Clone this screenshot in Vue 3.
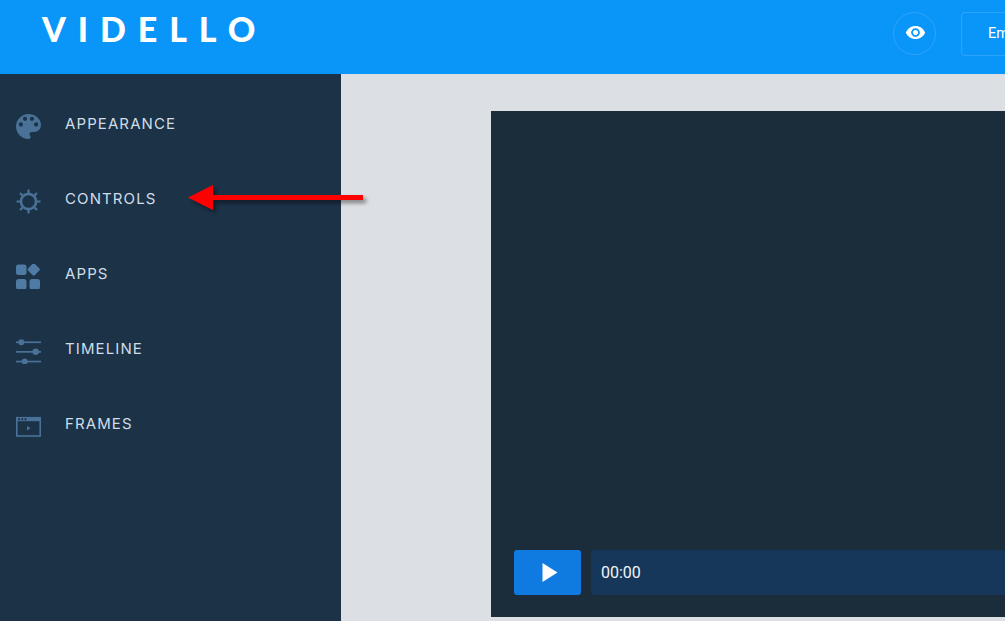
<script setup>
const navItems = [
  { label: 'APPEARANCE', icon: 'palette' },
  { label: 'CONTROLS', icon: 'gear' },
  { label: 'APPS', icon: 'apps' },
  { label: 'TIMELINE', icon: 'timeline' },
  { label: 'FRAMES', icon: 'frames' },
]
</script>

<template>
  <div class="page">
    <header class="topbar">
      <div class="logo">VIDELLO</div>
      <div class="topbar-actions">
        <button class="preview-btn" type="button" aria-label="Preview">
          <svg width="21" height="21" viewBox="0 0 24 24" fill="#fff">
            <path d="M12 4.5C7 4.5 2.73 7.61 1 12c1.73 4.39 6 7.5 11 7.5s9.27-3.11 11-7.5c-1.73-4.39-6-7.5-11-7.5zM12 17c-2.76 0-5-2.24-5-5s2.24-5 5-5 5 2.24 5 5-2.24 5-5 5zm0-8c-1.66 0-3 1.34-3 3s1.34 3 3 3 3-1.34 3-3-1.34-3-3-3z" />
          </svg>
        </button>
        <button class="embed-btn" type="button">Embed</button>
      </div>
    </header>

    <div class="body">
      <aside class="sidebar">
        <div v-for="item in navItems" :key="item.label" class="nav-item">
          <span class="nav-icon">
            <svg v-if="item.icon === 'palette'" width="25" height="25" viewBox="3 3 18 18" fill="#4a7198">
              <path d="M12 3c-4.97 0-9 4.03-9 9s4.03 9 9 9c.83 0 1.5-.67 1.5-1.5 0-.39-.15-.74-.39-1.01-.23-.26-.38-.61-.38-.99 0-.83.67-1.5 1.5-1.5H16c2.76 0 5-2.24 5-5 0-4.42-4.03-8-9-8zm-5.5 9c-.83 0-1.5-.67-1.5-1.5S5.67 9 6.5 9 8 9.67 8 10.5 7.33 12 6.5 12zm3-4C8.67 8 8 7.33 8 6.5S8.67 5 9.5 5s1.5.67 1.5 1.5S10.33 8 9.5 8zm5 0c-.83 0-1.5-.67-1.5-1.5S13.67 5 14.5 5s1.5.67 1.5 1.5S15.33 8 14.5 8zm3 4c-.83 0-1.5-.67-1.5-1.5S16.67 9 17.5 9s1.5.67 1.5 1.5-.67 1.5-1.5 1.5z" />
            </svg>
            <svg v-else-if="item.icon === 'gear'" width="25" height="25" viewBox="0 0 25 25" fill="none" stroke="#4a7198">
              <circle cx="12.5" cy="12.5" r="7.6" stroke-width="2.6" />
              <path stroke-width="2.2" d="M12.5 .5v3.5M12.5 21v3.5M.5 12.5H4M21 12.5h3.5M4 4l2.4 2.4M18.6 18.6L21 21M4 21l2.4-2.4M18.6 6.4L21 4" />
            </svg>
            <svg v-else-if="item.icon === 'apps'" width="25" height="25" viewBox="0 0 25 25" fill="#4f7aa3">
              <rect x="0" y="0.5" width="10.5" height="10.5" rx="2.5" />
              <rect x="12.9" y="0.8" width="9.6" height="9.6" rx="1.8" transform="rotate(45 17.7 5.6)" />
              <rect x="0" y="15" width="10.5" height="10.5" rx="2.5" />
              <rect x="13.5" y="15" width="10.5" height="10.5" rx="2.5" />
            </svg>
            <svg v-else-if="item.icon === 'timeline'" width="25" height="25" viewBox="0 0 25 25" fill="#4a7198">
              <rect x="0" y="2.4" width="25" height="1.7" />
              <rect x="0" y="12" width="25" height="1.7" />
              <rect x="0" y="21.7" width="25" height="1.7" />
              <circle cx="5.3" cy="3.2" r="3" />
              <circle cx="19.7" cy="12.8" r="3.2" />
              <circle cx="8.7" cy="22.5" r="3" />
            </svg>
            <svg v-else width="25" height="25" viewBox="0 0 25 25" fill="none">
              <rect x="0.8" y="3.7" width="23.4" height="18.3" stroke="#4a7198" stroke-width="1.6" />
              <rect x="0.8" y="3.2" width="23.4" height="4" fill="#4a7198" />
              <rect x="2.2" y="4.2" width="1.8" height="2" fill="#1c3247" />
              <rect x="5.4" y="4.2" width="1.8" height="2" fill="#1c3247" />
              <rect x="8.6" y="4.2" width="1.8" height="2" fill="#1c3247" />
              <path d="M11 12l3.6 2.2-3.6 2.2z" fill="#4a7198" />
            </svg>
          </span>
          <span class="nav-label">{{ item.label }}</span>
        </div>
      </aside>

      <main class="stage">
        <div class="player">
          <div class="controls">
            <button class="play-btn" type="button" aria-label="Play">
              <svg width="16" height="19" viewBox="0 0 16 19" fill="#fff"><path d="M0.5 0l15 9.5-15 9.5z" /></svg>
            </button>
            <div class="progress">00:00</div>
          </div>
        </div>
      </main>
    </div>

    <svg class="arrow" width="190" height="40" viewBox="0 0 190 40">
      <defs>
        <filter id="arrow-shadow" x="-10%" y="-40%" width="120%" height="200%">
          <feDropShadow dx="3" dy="3" stdDeviation="2" flood-color="#000" flood-opacity="0.45" />
        </filter>
      </defs>
      <path d="M3 15.5L28 3v10h150v5H28v10z" fill="#ff0000" filter="url(#arrow-shadow)" />
    </svg>
  </div>
</template>

<style>
html, body { margin: 0; overflow: hidden; }
</style>

<style scoped>
.page { position: relative; display: flex; flex-direction: column; width: 1005px; height: 621px; overflow: hidden; font-family: "Inter", "Liberation Sans", sans-serif; }
.topbar { display: flex; justify-content: space-between; height: 74px; flex: none; background: #0a95f9; }
.logo { padding: 8px 0 0 42px; font-family: "Lato", "Liberation Sans", sans-serif; font-weight: 900; font-size: 34px; line-height: 42px; letter-spacing: 11.9px; color: #fff; }
.topbar-actions { display: flex; align-items: flex-start; gap: 25px; padding-top: 12px; width: 112px; }
.preview-btn { display: flex; align-items: center; justify-content: center; flex: none; width: 43px; height: 43px; padding: 0 0 3px 2px; border: 1px solid rgba(255, 255, 255, 0.14); border-radius: 50%; background: transparent; }
.embed-btn { flex: none; width: 110px; height: 44px; padding: 0 0 2px 26px; text-align: left; border: 1px solid rgba(255, 255, 255, 0.14); border-radius: 4px; background: transparent; color: #fff; font-family: "Roboto", sans-serif; font-size: 14.5px; }
.body { display: flex; flex: 1; min-height: 0; }
.sidebar { flex: none; width: 341px; padding-top: 15px; background: #1c3247; box-sizing: border-box; }
.nav-item { display: flex; align-items: center; height: 75px; padding-left: 16px; }
.nav-icon { display: flex; flex: none; width: 25px; height: 25px; margin-right: 24px; }
.nav-label { margin-bottom: 6px; font-size: 15px; font-weight: 400; letter-spacing: 1.1px; color: #cfdde8; }
.stage { flex: 1; min-width: 0; padding: 37px 0 0 150px; background: #dcdfe3; }
.player { display: flex; align-items: flex-end; width: 800px; height: 506px; background: #1b2c3b; }
.controls { display: flex; flex: 1; gap: 10px; padding: 0 0 22px 23px; }
.play-btn { display: flex; align-items: center; justify-content: center; flex: none; width: 67px; height: 45px; padding: 0 0 0 5px; border: 0; border-radius: 3px; background: #0f7ae0; }
.progress { flex: 1; height: 45px; padding-left: 10px; line-height: 46px; border-radius: 3px; background: #17375a; color: #f2f5f8; font-family: "Roboto", sans-serif; font-size: 16px; }
.arrow { position: absolute; left: 185px; top: 182px; overflow: visible; }
</style>
